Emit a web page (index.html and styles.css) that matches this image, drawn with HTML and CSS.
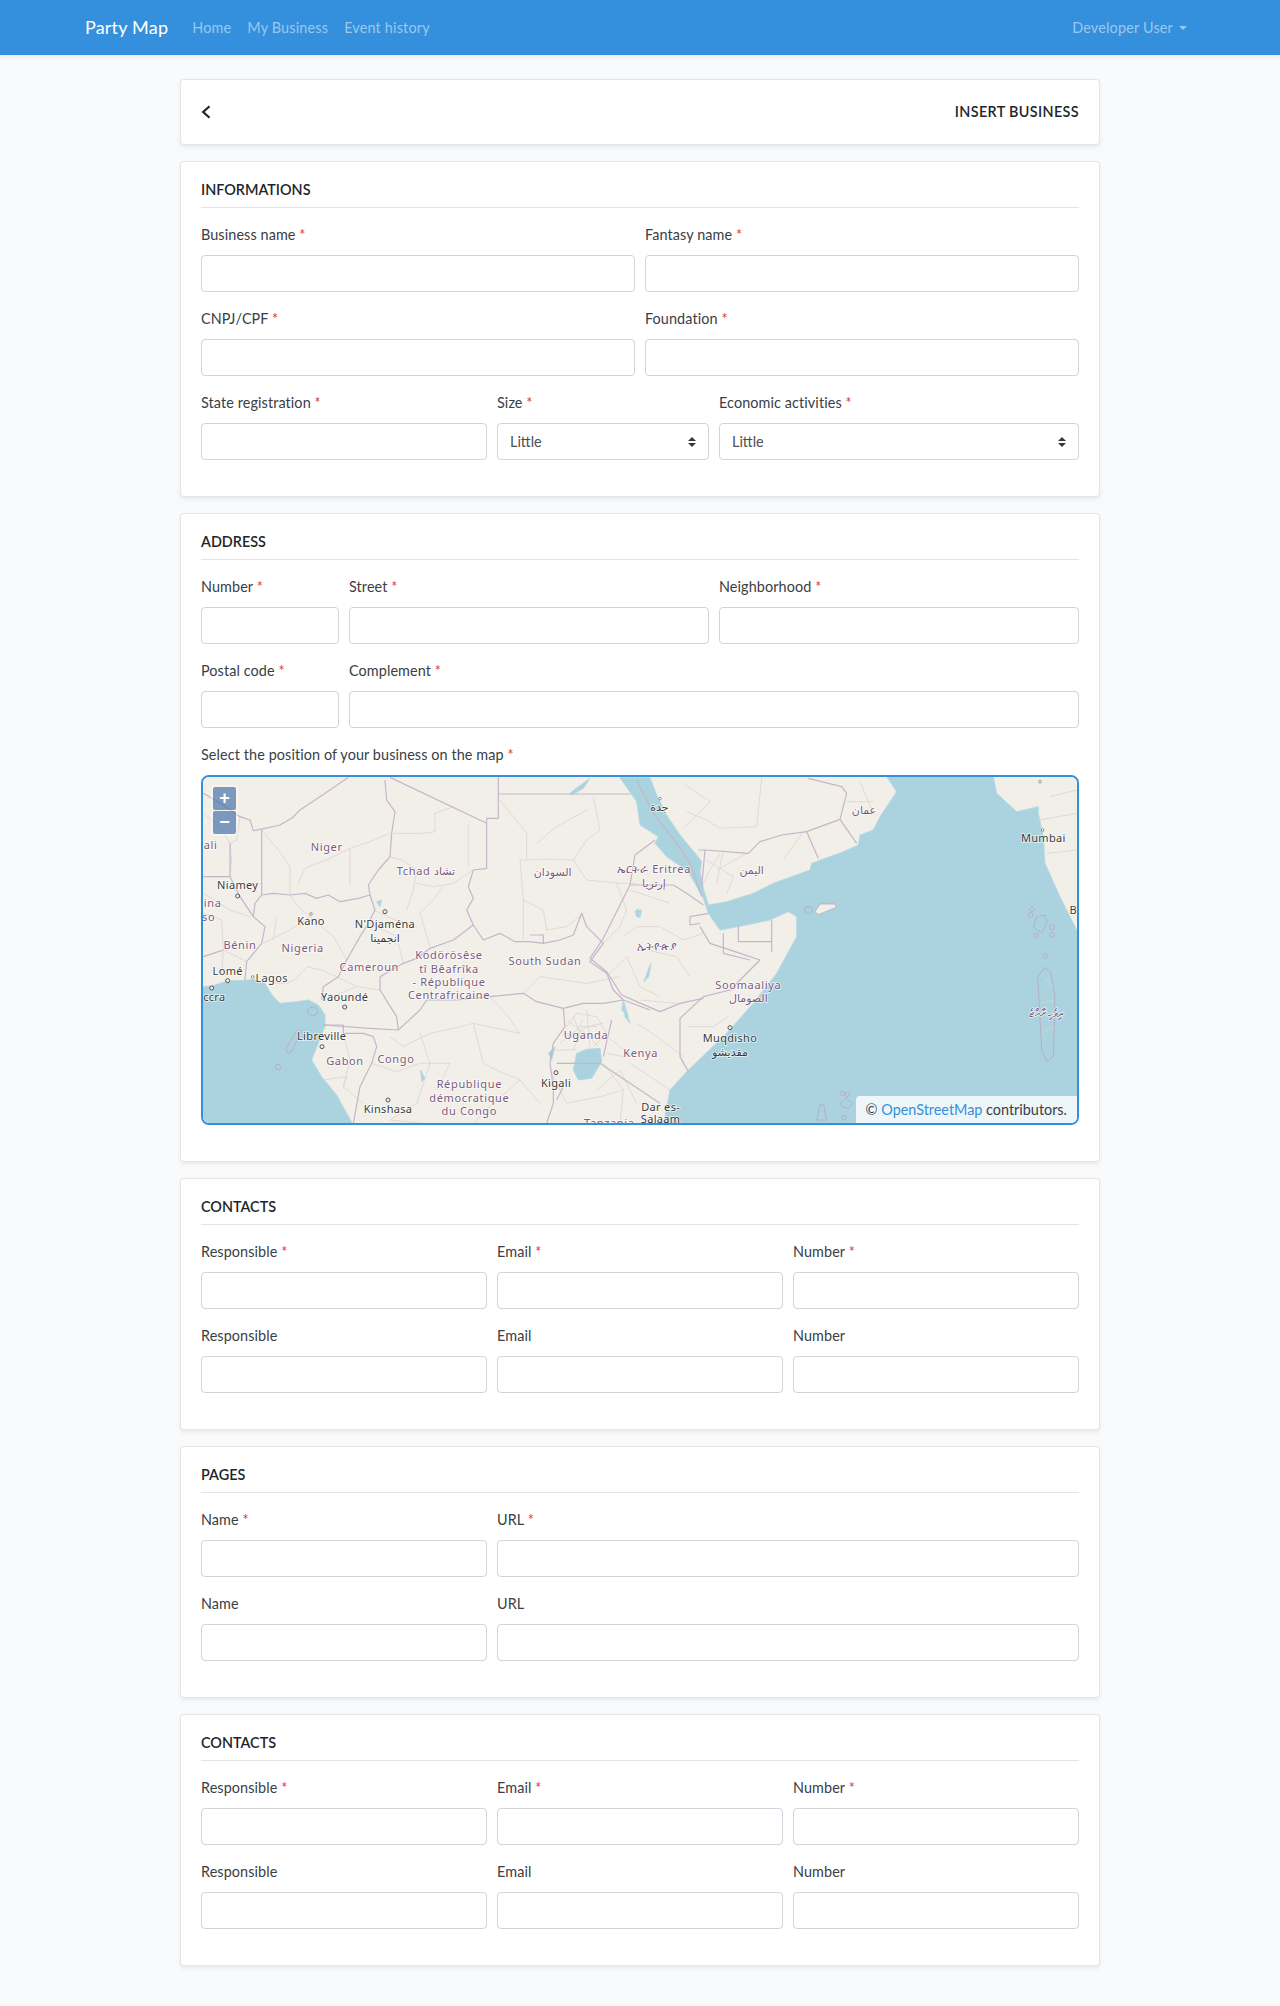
FILE: index.html
```html
<!DOCTYPE html>
<html lang="en">
<head>
    <meta charset="UTF-8">
    <meta name="viewport" content="width=device-width, initial-scale=1.0">
    <title>Party Map</title>
    <link rel="stylesheet" href="styles.css">
</head>
<body>
    <nav class="navbar">
        <div class="nav-inner">
            <a class="brand" href="#">Party Map</a>
            <a class="nav-link" href="#">Home</a>
            <a class="nav-link" href="#">My Business</a>
            <a class="nav-link" href="#">Event history</a>
            <a class="nav-link nav-user" href="#">Developer User<span class="caret"></span></a>
        </div>
    </nav>

    <main class="page">
        <div class="card card-head">
            <svg class="back" viewBox="0 0 10 14" width="10" height="14"><path d="M8.5 1.2 2.2 7l6.3 5.8" fill="none" stroke="#212529" stroke-width="2.2"/></svg>
            <span class="head-title">INSERT BUSINESS</span>
        </div>

        <section class="card">
            <h6 class="section-title">INFORMATIONS</h6>
            <div class="form-grid">
                <div class="field span-6"><label>Business name <i>*</i></label><input type="text"></div>
                <div class="field span-6"><label>Fantasy name <i>*</i></label><input type="text"></div>
                <div class="field span-6"><label>CNPJ/CPF <i>*</i></label><input type="text"></div>
                <div class="field span-6"><label>Foundation <i>*</i></label><input type="text"></div>
                <div class="field span-4"><label>State registration <i>*</i></label><input type="text"></div>
                <div class="field span-3"><label>Size <i>*</i></label><select><option>Little</option></select></div>
                <div class="field span-5"><label>Economic activities <i>*</i></label><select><option>Little</option></select></div>
            </div>
        </section>

        <section class="card">
            <h6 class="section-title">ADDRESS</h6>
            <div class="form-grid">
                <div class="field span-2"><label>Number <i>*</i></label><input type="text"></div>
                <div class="field span-5"><label>Street <i>*</i></label><input type="text"></div>
                <div class="field span-5"><label>Neighborhood <i>*</i></label><input type="text"></div>
                <div class="field span-2"><label>Postal code <i>*</i></label><input type="text"></div>
                <div class="field span-10"><label>Complement <i>*</i></label><input type="text"></div>
                <div class="field span-12">
                    <label>Select the position of your business on the map <i>*</i></label>
                    <div class="map">
                        <svg class="map-svg" viewBox="203 777 874 346" width="874" height="346">
                            <rect x="203" y="777" width="874" height="346" fill="#f2efe9"/>

                            <!-- west -->
                            <g transform="translate(190 770) scale(.33333)">
                                <g class="water">
                                    <path d="M30 650 65 648 90 640 115 632 150 632 190 628 225 640 240 665 250 680 270 700 320 695 355 690 385 705 405 735 405 770 392 800 385 820 365 870 395 920 440 975 470 1030 490 1065 30 1065Z"/>
                                    <path d="M1160 850 1190 838 1230 835 1235 875 1205 925 1165 930 1150 900Z"/>
                                    <path d="M1335 425 1355 420 1350 442 1340 440Z"/>
                                    <path d="M1140 70 1165 50 1200 25 1180 55 1145 75Z"/>
                                    <path d="M1300 690 1315 740 1295 720Z"/>
                                    <path d="M1075 850 1095 830 1085 870Z"/>
                                    <path d="M692 900 705 925 695 935Z"/>
                                    <path d="M560 395 575 390 570 410Z"/>
                                </g>
                                <g class="isle">
                                    <ellipse cx="368" cy="724" rx="15" ry="13"/>
                                    <path d="M288 835 320 782 332 785 305 845 292 850Z"/>
                                    <circle cx="264" cy="891" r="8"/>
                                </g>
                                <g class="minor">
                                    <path d="M120 220 125 270 120 320M215 180 240 210 265 240 300 290 300 370M325 340 345 295 420 265 480 235 540 215 600 190M480 235 480 345M600 260 635 270 680 300 670 360 650 420M610 190 630 190 700 190 735 185 735 130 790 110M835 165 835 290M680 340 730 350 790 340 850 300M990 270 1080 268 1150 270 1190 210 1230 180 1210 80M990 270 1000 390 1060 420 1070 480 1130 470 1180 430M1150 270 1190 330 1240 335 1290 340M1290 340 1340 340M760 350 725 395 690 430 705 480 720 530M550 420 615 450 680 470M470 570 430 500 395 470 360 440 330 460 300 480 260 500 220 520M360 440 320 405 300 375M260 440 250 510M440 620 395 600 350 590 320 625 290 640 240 640M170 575 130 555 100 540 40 560M100 540 95 610M40 430 70 440 95 450 100 540M120 320 40 320M40 370 80 395 120 420 180 440M570 660 500 650 440 620M400 690 450 670 500 650M460 790 480 870 460 950 490 975 520 1000M545 880 620 905 690 880 780 880M690 790 720 880 700 940 680 1000 600 1050M720 790 790 775 850 760 920 775 990 790M850 760 880 880 930 905 990 930 1050 1000M780 880 740 960M900 680 950 735 990 790M1000 670 1050 620 1120 630 1190 640M1190 640 1240 630 1290 620M1240 520 1290 470 1310 420 1280 340M1000 510 1000 390M1040 220 1100 170 1190 120M930 90 1010 190 1010 270M40 130 90 170 120 220M150 140 140 210 120 220M540 460 620 500 640 580M600 800 640 830 720 790M400 930 470 920 460 950M600 1050 700 1060M910 1000 990 930M850 1060 910 1000"/>
                                    <path d="M1130 770 1160 730 1220 740 1250 790 1210 830M1120 790 1180 800 1250 810M1150 740 1170 790 1150 840M1190 720 1200 830M1095 840 1160 840M1220 770 1170 770M1135 810 1190 770 1240 760M1110 820 1160 780 1180 750M1130 750 1200 800 1225 830M1250 850 1300 860 1380 840M1240 880 1300 960 1290 1060M1080 900 1130 1000 1230 980 1300 960"/>
                                </g>
                                <g class="major">
                                    <path d="M475 22 420 60 330 120 305 145 270 165 225 175 190 182 180 150 150 140 100 105 40 70"/>
                                    <path d="M585 30 590 90 615 125 605 190 600 260 565 300 535 345 540 375 505 385 450 395 415 375 380 385 345 370 300 375 250 370 215 375 195 400 190 440 225 470 215 520 170 575 165 630"/>
                                    <path d="M600 22 890 160"/>
                                    <path d="M925 20V145H890V295L850 300 835 350 850 385 830 420 850 465 880 510 930 490 975 515 1020 515 1060 520 1110 510 1150 495 1175 430 1190 470 1240 520 1200 575 1250 610 1270 660 1300 690 1380 720"/>
                                    <path d="M925 72H1340M1020 495H1060V520"/>
                                    <path d="M215 375V180"/>
                                    <path d="M540 375 555 420 535 460 510 500 470 570 445 620 400 650 395 690"/>
                                    <path d="M640 580 680 565 720 535 790 510 850 465M640 580 570 620 570 660 595 700 620 740 625 780 540 775 400 765"/>
                                    <path d="M625 780 690 720 710 690 800 690 900 680 1000 670 1040 695 1120 715 1180 700 1240 700 1300 690"/>
                                    <path d="M1120 715 1125 770 1090 820 1080 880 1090 950 1090 1000 1070 1060M1100 880H1230M1120 950 1100 990"/>
                                    <path d="M400 765 460 765 460 790 520 790 550 800 560 830 545 880 510 950 490 1060"/>
                                    <path d="M1265 750 1240 860"/>
                                    <path d="M120 220 120 320M40 320 120 320 150 380 190 440M40 560 100 540"/>
                                </g>
                                <g class="pins">
                                    <circle cx="143" cy="378" r="6"/><circle cx="585" cy="425" r="6"/><circle cx="113" cy="632" r="6"/><circle cx="65" cy="654" r="6"/><circle cx="464" cy="711" r="6"/><circle cx="396" cy="830" r="6"/><circle cx="594" cy="990" r="6"/><circle cx="1098" cy="908" r="6"/>
                                </g>
                                <g class="pins-small"><circle cx="363" cy="432" r="4"/><circle cx="188" cy="621" r="4"/></g>
                                <g class="land-label">
                                    <text x="62" y="238">ali</text>
                                    <text x="410" y="242">Niger</text>
                                    <text x="708" y="316">Tchad تشاد</text>
                                    <text x="1088" y="318">السودان</text>
                                    <text x="68" y="412">ina</text>
                                    <text x="56" y="453">so</text>
                                    <text x="150" y="538">Bénin</text>
                                    <text x="338" y="546">Nigeria</text>
                                    <text x="538" y="602">Cameroun</text>
                                    <text x="777" y="568">Kodörösêse</text>
                                    <text x="777" y="608">tî Bêafrîka</text>
                                    <text x="777" y="648">- République</text>
                                    <text x="777" y="688">Centrafricaine</text>
                                    <text x="1065" y="585">South Sudan</text>
                                    <text x="1188" y="808">Uganda</text>
                                    <text x="465" y="886">Gabon</text>
                                    <text x="618" y="880">Congo</text>
                                    <text x="838" y="954">République</text>
                                    <text x="838" y="995">démocratique</text>
                                    <text x="838" y="1035">du Congo</text>
                                </g>
                                <g class="city-label">
                                    <text x="143" y="358">Niamey</text>
                                    <text x="363" y="465">Kano</text>
                                    <text x="585" y="475">N'Djaména</text>
                                    <text x="585" y="515">انجمينا</text>
                                    <text x="113" y="614">Lomé</text>
                                    <text x="245" y="635">Lagos</text>
                                    <text x="73" y="693">ccra</text>
                                    <text x="464" y="692">Yaoundé</text>
                                    <text x="395" y="810">Libreville</text>
                                    <text x="594" y="1030">Kinshasa</text>
                                    <text x="1098" y="952">Kigali</text>
                                </g>
                            </g>

                            <!-- horn of africa and arabia -->
                            <g transform="translate(640 770) scale(.33333)">
                                <g class="water">
                                    <path d="M-60 23 30 23 50 75 80 135 120 195 170 255 185 275 180 305 190 355 205 405 260 395 340 370 400 340 510 300 515 280 610 245 655 225 660 195 700 180 720 140 770 65 740 20 1060 20 1070 70 1130 125 1195 110 1195 130 1210 200 1215 280 1260 380 1315 490 1315 1065 70 1065 90 960 140 905 260 790 340 700 410 610 470 500 470 440 445 425 390 450 320 465 240 480 205 430 190 385 145 305 80 260 45 220 55 200 0 165-10 95Z"/>
                                    <path d="M-5 430-15 425-5 415 0 440Z"/>
                                    <path d="M-50 695-35 745-30 760-45 740Z"/>
                                    <path d="M28 590 34 580 26 620 12 635Z"/>
                                </g>
                                <g class="isle">
                                    <ellipse cx="505" cy="420" rx="12" ry="11"/>
                                    <circle cx="1176" cy="418" r="7"/><circle cx="1172" cy="435" r="7"/><circle cx="1189" cy="497" r="7"/><circle cx="1237" cy="471" r="8"/><circle cx="1236" cy="495" r="7"/><circle cx="1215" cy="558" r="7"/>
                                    <path d="M1180 470 1190 440 1215 435 1222 455 1205 490Z"/>
                                    <path d="M1193 620 1215 592 1232 605 1245 680 1240 860 1220 875 1205 840 1200 740Z"/>
                                    <circle cx="607" cy="970" r="7"/><circle cx="622" cy="973" r="7"/>
                                    <path d="M600 1000 620 985 638 1000 625 1015 605 1010Z"/>
                                    <circle cx="612" cy="1043" r="7"/>
                                    <path d="M530 1050 540 1005 552 1005 555 1030 560 1050Z"/>
                                </g>
                                <path class="socotra" d="M525 425 540 402 585 402 590 412 550 428 535 434Z"/>
                                <g class="minor">
                                    <path d="M365 22 350 170 240 175 200 150 140 125M130 40 210 95 130 175M660 35 700 130M620 95 700 95M250 240 230 340M430 270 490 185M200 270 280 320 260 370M230 300 320 250M-30 360 90 400M20 540 110 560 150 620M0 690 110 700M140 770 220 770 265 740M-30 880 90 960M1210 620 1240 650M1205 700 1240 690M1205 790 1240 770M1200 150 1310 130M1220 250 1310 240M1230 80 1310 60M-50 500-10 470 60 470 130 510 190 490M-100 620-40 560 0 650 60 680M-10 760 50 800 130 860M-130 960-60 900-10 1000M-100 800-30 850M240 250 210 300 190 340"/>
                                </g>
                                <g class="major">
                                    <path d="M195 240 325 250 360 215 425 195 500 185 600 148 620 70 605 50 505 25"/>
                                    <path d="M500 185 535 265M600 148 650 220"/>
                                    <path d="M175 240 195 240 185 350"/>
                                    <path d="M-10 30 40 130 110 220 150 280 185 380"/>
                                    <path d="M180 470 210 520 285 545 360 570 270 660 190 680 120 745 120 860 145 905"/>
                                    <path d="M395 450V545M295 465V515H395M250 490V550L330 570"/>
                                    <path d="M205 430 150 440 150 465 180 460"/>
                                    <path d="M45 210-15 255-30 345-60 405-110 505-150 565-100 605-55 675-10 695 60 725 120 700 190 685"/>
                                    <path d="M-30 345 100 345 140 370 190 405"/>
                                    <path d="M-120 880 60 1000"/>
                                </g>
                                <g class="pins"><circle cx="270" cy="773" r="6"/></g>
                                <g class="pins-small"><circle cx="60" cy="86" r="4"/><circle cx="1208" cy="180" r="4"/><circle cx="1200" cy="35" r="4"/></g>
                                <g class="land-label">
                                    <text x="42" y="309">ኤርትራ Eritrea</text>
                                    <text x="42" y="351">إرتريا</text>
                                    <text x="335" y="313">اليمن</text>
                                    <text x="52" y="540">ኢትዮጵያ</text>
                                    <text x="325" y="656">Soomaaliya</text>
                                    <text x="325" y="697">الصومال</text>
                                    <text x="2" y="861">Kenya</text>
                                    <text x="672" y="132">عمان</text>
                                    <text x="1220" y="742">ދިވެހިރާއްޖެ</text>
                                    <text x="-92" y="1072">Tanzania</text>
                                </g>
                                <g class="city-label">
                                    <text x="58" y="122">جدة</text>
                                    <text x="270" y="816">Muqdisho</text>
                                    <text x="270" y="859">مقديشو</text>
                                    <text x="62" y="1024">Dar es-</text>
                                    <text x="62" y="1059">Salaam</text>
                                    <text x="1210" y="215">Mumbai</text>
                                    <text x="1300" y="433">B</text>
                                </g>
                            </g>
                        </svg>
                        <div class="map-zoom">
                            <button type="button">+</button>
                            <button type="button">−</button>
                        </div>
                        <div class="map-credit">© <a href="#">OpenStreetMap</a> contributors.</div>
                    </div>
                </div>
            </div>
        </section>

        <section class="card">
            <h6 class="section-title">CONTACTS</h6>
            <div class="form-grid">
                <div class="field span-4"><label>Responsible <i>*</i></label><input type="text"></div>
                <div class="field span-4"><label>Email <i>*</i></label><input type="text"></div>
                <div class="field span-4"><label>Number <i>*</i></label><input type="text"></div>
                <div class="field span-4"><label>Responsible</label><input type="text"></div>
                <div class="field span-4"><label>Email</label><input type="text"></div>
                <div class="field span-4"><label>Number</label><input type="text"></div>
            </div>
        </section>

        <section class="card">
            <h6 class="section-title">PAGES</h6>
            <div class="form-grid">
                <div class="field span-4"><label>Name <i>*</i></label><input type="text"></div>
                <div class="field span-8"><label>URL <i>*</i></label><input type="text"></div>
                <div class="field span-4"><label>Name</label><input type="text"></div>
                <div class="field span-8"><label>URL</label><input type="text"></div>
            </div>
        </section>

        <section class="card">
            <h6 class="section-title">CONTACTS</h6>
            <div class="form-grid">
                <div class="field span-4"><label>Responsible <i>*</i></label><input type="text"></div>
                <div class="field span-4"><label>Email <i>*</i></label><input type="text"></div>
                <div class="field span-4"><label>Number <i>*</i></label><input type="text"></div>
                <div class="field span-4"><label>Responsible</label><input type="text"></div>
                <div class="field span-4"><label>Email</label><input type="text"></div>
                <div class="field span-4"><label>Number</label><input type="text"></div>
            </div>
        </section>
    </main>
</body>
</html>
```

FILE: styles.css
```css
* {
    box-sizing: border-box;
}
body {
    margin: 0;
    background-color: #f8fafc;
    color: #3a4046;
    font-family: Lato, "Noto Sans", sans-serif;
    font-size: 14.4px;
    line-height: 1.6;
    letter-spacing: .1px;
}
a {
    text-decoration: none;
}

.navbar {
    height: 55px;
    background-color: #3490dc;
    box-shadow: 0 2px 4px rgba(0, 0, 0, .075);
}
.nav-inner {
    width: 1110px;
    height: 55px;
    margin: 0 auto;
    display: flex;
    align-items: center;
}
.brand {
    margin-right: 16px;
    color: #fff;
    font-size: 18px;
    letter-spacing: .2px;
}
.nav-link {
    padding: 8px;
    color: rgba(255, 255, 255, .5);
    letter-spacing: .18px;
}
.nav-user {
    margin-left: auto;
}
.caret {
    display: inline-block;
    margin-left: 6px;
    vertical-align: 3px;
    border-top: 4.5px solid;
    border-left: 4.5px solid transparent;
    border-right: 4.5px solid transparent;
}

.page {
    width: 920px;
    margin: 0 auto;
    padding: 24px 0;
}
.card {
    margin-bottom: 16px;
    padding: 20px;
    background-color: #fff;
    border: 1px solid rgba(0, 0, 0, .1);
    border-radius: 4px;
    box-shadow: 0 2px 4px rgba(0, 0, 0, .075);
}
.card-head {
    height: 66px;
    display: flex;
    align-items: center;
    justify-content: space-between;
}
.back {
    display: block;
}
.head-title, .section-title {
    color: #212529;
    font-size: 14.4px;
    font-weight: 600;
}
.head-title {
    letter-spacing: .35px;
}
.section-title {
    margin: 0 0 16px;
    padding-bottom: 10px;
    line-height: 15px;
    border-bottom: 1px solid rgba(0, 0, 0, .1);
    letter-spacing: 0;
}

.form-grid {
    display: grid;
    grid-template-columns: repeat(12, 1fr);
    column-gap: 10px;
}
.span-2 { grid-column: span 2; }
.span-3 { grid-column: span 3; }
.span-4 { grid-column: span 4; }
.span-5 { grid-column: span 5; }
.span-6 { grid-column: span 6; }
.span-8 { grid-column: span 8; }
.span-10 { grid-column: span 10; }
.span-12 { grid-column: span 12; }

.field {
    margin-bottom: 16px;
}
.field label {
    display: block;
    margin-bottom: 9px;
    line-height: 22px;
}
.field label i {
    color: #e3342f;
    font-style: normal;
}
.field input, .field select {
    display: block;
    width: 100%;
    height: 37px;
    padding: 6px 12px;
    background-color: #fff;
    border: 1px solid #ced4da;
    border-radius: 4px;
    color: #495057;
    font-family: inherit;
    font-size: 14.4px;
}
.field select {
    appearance: none;
    padding-right: 28px;
    background: #fff url("data:image/svg+xml,%3csvg xmlns='http://www.w3.org/2000/svg' width='4' height='5' viewBox='0 0 4 5'%3e%3cpath fill='%23343a40' d='M2 0L0 2h4zm0 5L0 3h4z'/%3e%3c/svg%3e") no-repeat right 12px center / 8px 10px;
}

.map {
    position: relative;
    height: 350px;
    border: 2px solid #3490dc;
    border-radius: 8px;
    overflow: hidden;
    letter-spacing: 0;
}
.map-svg {
    display: block;
}
.water path {
    fill: #aad3df;
    stroke: #b9d9e2;
    stroke-width: 3;
    stroke-linejoin: round;
}
.isle > * {
    fill: #aad3df;
    stroke: #b8a9bf;
    stroke-width: 2.5;
}
.socotra {
    fill: #f2efe9;
    stroke: #b8a9bf;
    stroke-width: 2.5;
}
.minor path {
    fill: none;
    stroke: #dbd3d4;
    stroke-width: 2.4;
    stroke-linejoin: round;
}
.major path {
    fill: none;
    stroke: #c6b5c9;
    stroke-width: 3.6;
    stroke-linejoin: round;
}
.pins circle {
    fill: #f2efe9;
    stroke: #555;
    stroke-width: 3;
}
.pins-small circle {
    fill: #fff;
    stroke: #666;
    stroke-width: 2;
}
.land-label text, .city-label text {
    font-family: "Noto Sans", "DejaVu Sans", sans-serif;
    font-size: 33px;
    letter-spacing: 2px;
    text-anchor: middle;
    paint-order: stroke;
    stroke: rgba(255, 255, 255, .7);
    stroke-width: 5;
}
.land-label text {
    fill: #7b5a80;
}
.city-label text {
    fill: #3a3a3a;
    letter-spacing: 1px;
}

.map-zoom {
    position: absolute;
    top: 8px;
    left: 8px;
    padding: 2px;
    background-color: rgba(255, 255, 255, .4);
    border-radius: 4px;
}
.map-zoom button {
    display: block;
    width: 23px;
    height: 23px;
    margin: 0 0 1px;
    padding: 0;
    background-color: rgba(0, 60, 136, .5);
    border: none;
    border-radius: 2px;
    color: #fff;
    font-family: Arial, "Liberation Sans", sans-serif;
    font-size: 18px;
    font-weight: 700;
    line-height: 23px;
}
.map-zoom button:last-child {
    margin-bottom: 0;
}
.map-credit {
    position: absolute;
    right: 0;
    bottom: 0;
    height: 27px;
    padding: 2px 10px 0;
    background-color: rgba(255, 255, 255, .8);
    border-top-left-radius: 4px;
    font-size: 14.4px;
    white-space: nowrap;
}
.map-credit a {
    color: #3490dc;
}
```
